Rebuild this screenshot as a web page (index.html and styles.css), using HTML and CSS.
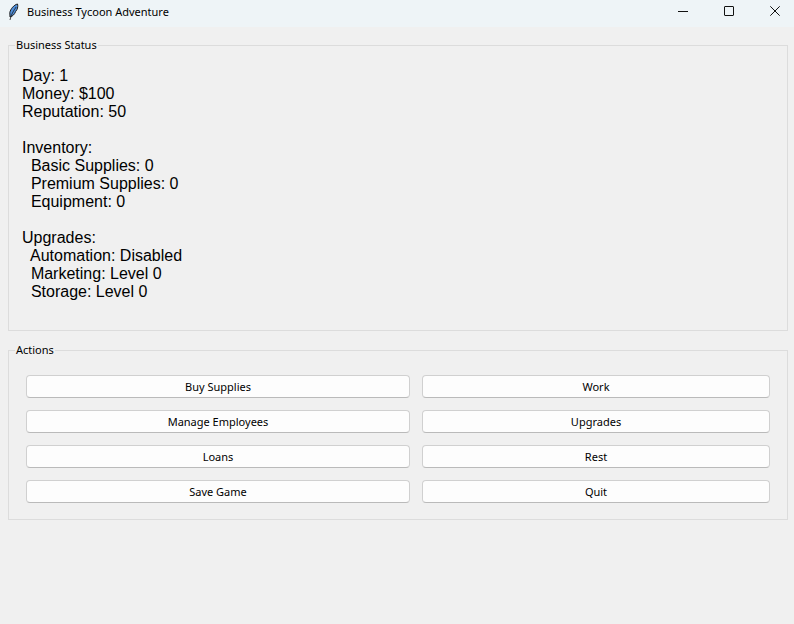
FILE: index.html
```html
<!DOCTYPE html>
<html lang="en">
<head>
<meta charset="utf-8">
<title>Business Tycoon Adventure</title>
<link rel="stylesheet" href="styles.css">
</head>
<body>
<header class="titlebar">
  <svg class="feather" viewBox="0 0 16 18" aria-hidden="true">
    <path d="M11.500 1C8 1.800 4.500 6 3.800 9.500L4 14C6.500 13.500 8.800 11 9.600 8.500L11 6.500C11.800 4.500 12 2.500 11.500 1Z" fill="#4f8fdc" stroke="#1c1c1c"/>
    <path d="M10.200 4C7.500 7.500 5 12 4 17" fill="none" stroke="#1c1c1c" stroke-width=".8"/>
  </svg>
  <h1 class="title">Business Tycoon Adventure</h1>
  <div class="controls">
    <button class="control" aria-label="Minimize"><svg viewBox="0 0 10 10"><path d="M0 5.500H10"/></svg></button>
    <button class="control" aria-label="Maximize"><svg viewBox="0 0 10 10"><rect x=".5" y=".5" width="9" height="9" rx=".5"/></svg></button>
    <button class="control" aria-label="Close"><svg viewBox="0 0 10 10"><path d="M.3 .3L9.700 9.700M9.700 .3L.3 9.700"/></svg></button>
  </div>
</header>
<main class="content">
  <fieldset class="group">
    <legend>Business Status</legend>
    <pre class="status">Day: 1
Money: $100
Reputation: 50

Inventory:
  Basic Supplies: 0
  Premium Supplies: 0
  Equipment: 0

Upgrades:
  Automation: Disabled
  Marketing: Level 0
  Storage: Level 0
</pre>
  </fieldset>
  <fieldset class="group">
    <legend>Actions</legend>
    <div class="actions">
      <button class="action">Buy Supplies</button>
      <button class="action">Work</button>
      <button class="action">Manage Employees</button>
      <button class="action">Upgrades</button>
      <button class="action">Loans</button>
      <button class="action">Rest</button>
      <button class="action">Save Game</button>
      <button class="action">Quit</button>
    </div>
  </fieldset>
</main>
</body>
</html>
```
FILE: styles.css
```css
* { box-sizing: border-box; }
body {
  margin: 0;
  min-height: 100vh;
  background: #f0f0f0;
  color: #000;
  font: 11px/16px "Noto Sans", "Open Sans", sans-serif;
}
.titlebar {
  display: flex;
  align-items: center;
  height: 27px;
  padding-left: 6px;
  background: #eef4f7;
}
.feather { width: 16px; height: 18px; margin: 0 5px 4px 0; }
.title { margin: 0 0 3px; font-size: 11px; font-weight: 400; }
.controls { display: flex; gap: 8px; margin-left: auto; }
.control {
  display: grid;
  place-items: center;
  width: 38px;
  height: 22px;
  margin-bottom: 5px;
  padding: 0;
  border: 0;
  background: none;
}
.control svg { width: 10px; height: 10px; fill: none; stroke: #111; }
.content {
  display: grid;
  gap: 11px;
  padding: 10px 6px 0 8px;
}
.group {
  min-width: 0;
  margin: 0;
  padding: 14px 17px 16px 13px;
  border: 1px solid #dcdcdc;
}
.group legend { margin-left: -7px; padding: 0 1px; }
.status {
  margin: 0 0 13px;
  font: 16px/18px "Liberation Sans", Arial, sans-serif;
}
.actions {
  display: grid;
  grid-template-columns: 384fr 348fr;
  gap: 12px;
  margin: 3px 0 0 4px;
}
.action {
  height: 23px;
  padding: 0;
  border: 1px solid #d0d0d0;
  border-bottom-color: #bababa;
  border-radius: 4px;
  background: #fdfdfd;
  color: #000;
  font: inherit;
}
```
